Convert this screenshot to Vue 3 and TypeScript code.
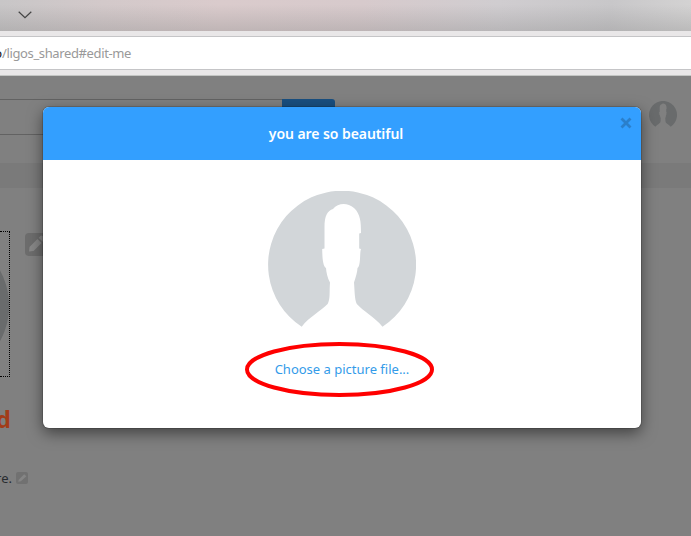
<script setup lang="ts">
const silhouette =
  'M33.7 135.7 A74 74 0 1 1 114.5 135.7 C107 126.5 95 120 88.8 113 C86.5 108 86.7 100 86 91.5 C88.2 85 89.3 81 89.5 77 C93 75 91.5 61 93 58 L91.2 57.5 L91.2 42.5 L93 42 C93 31 92.5 23 86 17 C79 11 70 12 65 18 C59.5 19.5 56.5 25 56.5 36 L56.5 57.5 L54.2 58 C54.3 64 54.5 75 58 77 C58.2 81 59.5 87 62 91.5 C61.2 101 62.5 108 59.6 113 C53 120 41.5 125.5 33.7 135.7 Z'
const title: string = 'you are so beautiful'
const pick: string = 'Choose a picture file...'
</script>

<template>
  <div class="window">
    <div class="titlebar">
      <svg class="chevron" viewBox="0 0 14 8"><path d="M.7.7 7 6.7 13.3.7" /></svg>
    </div>
    <div class="toolbar">
      <div class="address"><span class="host">o</span><span class="path">/ligos_shared#edit-me</span></div>
    </div>
    <div class="page">
      <header class="search">
        <div class="field"></div>
        <div class="go"></div>
        <svg class="user" viewBox="0 0 148 148"><path :d="silhouette" /></svg>
      </header>
      <div class="band"></div>
      <section class="profile">
        <div class="photo"><svg viewBox="0 0 148 148"><path :d="silhouette" /></svg></div>
        <div class="edit">
          <svg viewBox="0 0 22 22"><path d="M4 18.5 4.5 14 12.5 6 16.5 10 8.5 18ZM13.7 4.8 15.5 3Q16.5 2.2 17.5 3L19.5 5Q20.3 6 19.5 7L17.7 8.8Z" /></svg>
        </div>
      </section>
      <div class="name"><span>d</span></div>
      <div class="about">
        <span class="words">re.</span>
        <span class="mini"><svg viewBox="0 0 11 11"><path d="M2 9 2.5 7 7.5 2 9.5 4 4.5 8.5Z" /></svg></span>
      </div>
    </div>

    <div class="modal">
      <div class="head">
        <h1>{{ title }}</h1>
        <svg class="close" viewBox="0 0 12 12"><path d="M1.5 1.5 10.5 10.5M10.5 1.5 1.5 10.5" /></svg>
      </div>
      <div class="body">
        <svg class="avatar" viewBox="0 0 148 148"><path :d="silhouette" /></svg>
        <a class="choose">{{ pick }}
          <svg class="ring" viewBox="0 0 189 55"><ellipse cx="94.5" cy="27.5" rx="92.5" ry="25.5" /></svg>
        </a>
      </div>
    </div>
  </div>
</template>

<style>
body {
  margin: 0;
  overflow: hidden;
}
</style>

<style scoped>
* {
  box-sizing: border-box;
}
svg {
  display: block;
}
.window {
  position: relative;
  display: flex;
  flex-direction: column;
  width: 691px;
  height: 536px;
  overflow: hidden;
  font-family: 'Noto Sans', 'Open Sans', sans-serif;
}
.titlebar {
  height: 31px;
  padding: 11px 0 0 18px;
  background:
    linear-gradient(rgba(150, 150, 150, 0) 15%, rgba(130, 130, 130, 0.3)),
    linear-gradient(97deg, #c8c6c7 0, #d3c9ca 15%, #dacbcc 32%, #d7cacc 52%, #d0cdd0 72%, #c8c7c9 88%, #d4d3d3 100%);
}
.chevron {
  width: 14px;
  height: 8px;
  fill: none;
  stroke: #444;
  stroke-width: 1.2;
}
.toolbar {
  height: 45px;
  padding-top: 5px;
  background: #e9e7e8;
  border-bottom: 1px solid #c3c5c3;
}
.address {
  height: 34px;
  border: solid #c5c5c7;
  border-width: 1px 0;
  background: #fff;
  display: flex;
  align-items: center;
  line-height: 32px;
  font-size: 13px;
  white-space: nowrap;
}
.host {
  display: flex;
  justify-content: flex-end;
  width: 2px;
  color: #111;
}
.path {
  color: #999;
  letter-spacing: -0.37px;
}
.page {
  flex: 1;
  background: #808080;
}
.search {
  display: flex;
  height: 87px;
  padding-top: 23px;
}
.field {
  width: 282px;
  height: 36px;
  border: solid #626262;
  border-width: 1px 0;
}
.go {
  width: 53px;
  height: 36px;
  border-radius: 0 3px 3px 0;
  background: #194f80;
}
.user {
  width: 28px;
  height: 28px;
  margin: 2px 0 0 314px;
  fill: #696b6c;
}
.band {
  height: 25px;
  background: #7a7a7a;
}
.profile {
  display: flex;
  height: 189px;
  padding-top: 43px;
}
.photo {
  width: 10px;
  height: 146px;
  border: dotted #000;
  border-width: 1px 1px 1px 0;
  overflow: hidden;
  display: flex;
  justify-content: flex-end;
}
.photo svg {
  flex: none;
  width: 148px;
  height: 148px;
  fill: #696b6c;
}
.edit {
  width: 23px;
  height: 23px;
  margin: 2px 0 0 15px;
  border-radius: 4px;
  background: #6d6d6d;
}
.edit svg {
  width: 22px;
  height: 22px;
  fill: #888;
}
.name {
  display: flex;
  justify-content: flex-end;
  width: 11px;
  height: 85px;
  padding-top: 25px;
  color: #a23c18;
  font-size: 24px;
  font-weight: 700;
  line-height: 34px;
}
.about {
  display: flex;
  align-items: center;
  height: 32px;
  padding-bottom: 1px;
  color: #292c30;
  font-size: 13px;
}
.words {
  display: flex;
  justify-content: flex-end;
  width: 12px;
}
.mini {
  width: 12px;
  height: 12px;
  margin-left: 4px;
  border-radius: 2px;
  background: #717171;
}
.mini svg {
  width: 12px;
  height: 12px;
  fill: #858585;
}
.modal {
  position: absolute;
  left: 43px;
  top: 107px;
  width: 598px;
  height: 321px;
  border-radius: 6px;
  background: #fff;
  box-shadow: 0 5px 15px rgba(0, 0, 0, 0.5), 0 0 0 1px rgba(0, 0, 0, 0.15);
}
.head {
  display: flex;
  height: 53px;
  border-radius: 6px 6px 0 0;
  background: #339fff;
}
.head h1 {
  flex: 1;
  margin: 0;
  padding-left: 15px;
  text-align: center;
  color: #fff;
  font-size: 14px;
  font-weight: 600;
  letter-spacing: -0.07px;
  line-height: 53px;
}
.close {
  width: 12px;
  height: 12px;
  margin: 10px 9px 0 6px;
  fill: none;
  stroke: #2a7fcb;
  stroke-width: 2.8;
}
.body {
  display: flex;
  flex-direction: column;
  align-items: center;
  padding-top: 31px;
}
.avatar {
  width: 148px;
  height: 148px;
  fill: #d2d6d9;
}
.choose {
  position: relative;
  margin-top: 20px;
  line-height: 20px;
  color: #339be9;
  font-size: 13px;
  white-space: nowrap;
}
.ring {
  position: absolute;
  left: -30px;
  top: -17px;
  width: 189px;
  height: 55px;
  fill: none;
  stroke: #f00;
  stroke-width: 4;
}
</style>
